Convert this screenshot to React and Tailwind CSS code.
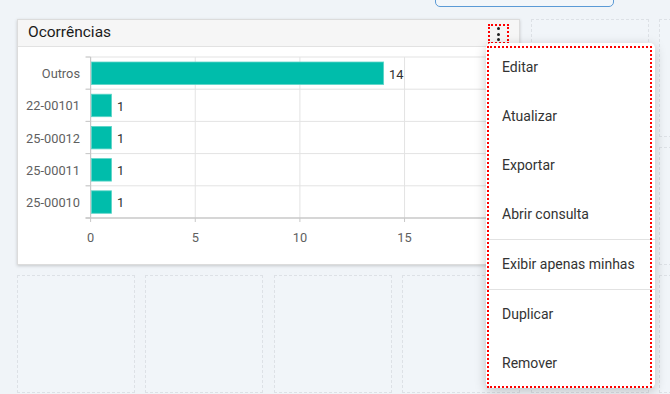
import React from "react";

const cats = [
  ["Outros", 14],
  ["22-00101", 1],
  ["25-00012", 1],
  ["25-00011", 1],
  ["25-00010", 1],
];

function Chart() {
  const x0 = 72.6;
  const unit = 20.93;
  const top = 10;
  const band = 32.2;
  const bottom = top + band * 5;
  const xEnd = x0 + unit * 20;
  return (
    <svg width="501" height="217" className="block">
      {[5, 10, 15, 20].map((v) => (
        <line key={v} x1={x0 + v * unit} x2={x0 + v * unit} y1={top} y2={bottom} stroke="#e3e3e3" strokeWidth="1" />
      ))}
      {[0, 1, 2, 3, 4].map((i) => (
        <line key={i} x1={x0 - 5} x2={xEnd} y1={top + i * band} y2={top + i * band} stroke="#e3e3e3" strokeWidth="1" />
      ))}
      {[0, 1, 2, 3, 4, 5].map((i) => (
        <line key={"t" + i} x1={x0 - 5} x2={x0} y1={top + i * band} y2={top + i * band} stroke="#c8c8c8" strokeWidth="1" />
      ))}
      {[0, 5, 10, 15, 20].map((v) => (
        <line key={"xt" + v} x1={x0 + v * unit} x2={x0 + v * unit} y1={bottom} y2={bottom + 4} stroke="#c8c8c8" strokeWidth="1" />
      ))}
      <line x1={x0} x2={x0} y1={top} y2={bottom} stroke="#c8c8c8" strokeWidth="1.2" />
      <line x1={x0 - 5} x2={xEnd} y1={bottom} y2={bottom} stroke="#c8c8c8" strokeWidth="1.5" />
      {cats.map(([name, v], i) => {
        const y = top + i * band;
        return (
          <g key={name}>
            <rect x={x0 + 0.8} y={y + 5} width={v * unit - 0.8} height={22.5} fill="#00bdab" stroke="#5ed5c8" strokeWidth="0.8" />
            <text x={62} y={y + band / 2 + 0.5} textAnchor="end" dominantBaseline="central" fontSize="12.8" fill="#5f5f5f" fontFamily="Roboto, sans-serif">
              {name}
            </text>
            <text x={x0 + v * unit + 5.5} y={y + band / 2 + 1} dominantBaseline="central" fontSize="12.8" fill="#2f2f2f" fontFamily="Roboto, sans-serif">
              {v}
            </text>
          </g>
        );
      })}
      {[0, 5, 10, 15].map((v) => (
        <text key={"xl" + v} x={x0 + v * unit} y={190} textAnchor="middle" dominantBaseline="central" fontSize="12.8" fill="#5f5f5f" fontFamily="Roboto, sans-serif">
          {v}
        </text>
      ))}
    </svg>
  );
}

function Cell() {
  return <div className="border border-dashed border-[#dde1e6] bg-[#f1f5f9]" />;
}

const items = [
  "Editar",
  "Atualizar",
  "Exportar",
  "Abrir consulta",
  "|",
  "Exibir apenas minhas",
  "|",
  "Duplicar",
  "Remover",
];

export default function App() {
  return (
    <div className="relative w-[670px] h-[394px] overflow-hidden bg-[#f0f4f8] font-['Roboto',sans-serif]">
      <div className="flex h-[7px] items-end pl-[435px]">
        <div className="h-[32px] w-[179px] shrink-0 rounded-[5px] border border-[#5b9ad6] bg-[#f2f6fa]" />
      </div>
      <div className="ml-[17px] mt-[12px] grid grid-cols-[repeat(6,118px)] grid-rows-[repeat(3,118px)] gap-x-[10.4px] gap-y-[10px]">
        <div className="col-span-4 row-span-2 flex flex-col border border-[#dcdcdc] bg-white shadow-[0_1px_3px_rgba(0,0,0,0.18)]">
          <div className="flex h-[27px] shrink-0 items-center justify-between border-b border-[#e2e2e2] bg-[#f6f6f6] pl-[10px] pr-[10px]">
            <span className="text-[15.5px] leading-none text-[#1a1a1a]">Ocorrências</span>
            <div className="mt-[2px] flex h-[20px] w-[21px] flex-col items-center justify-center gap-[2.5px] border-2 border-dotted border-[#ff0000]">
              <span className="block h-[3px] w-[3px] rounded-full bg-[#222]" />
              <span className="block h-[3px] w-[3px] rounded-full bg-[#222]" />
              <span className="block h-[3px] w-[3px] rounded-full bg-[#222]" />
            </div>
          </div>
          <Chart />
        </div>
        <Cell />
        <Cell />
        <Cell />
        <Cell />
        <Cell />
        <Cell />
        <Cell />
        <Cell />
        <Cell />
        <Cell />
      </div>

      <div className="absolute left-[486px] top-[43px] w-[169px] rounded-[5px] bg-white shadow-[0_3px_12px_rgba(0,0,0,0.22)]">
        <div className="pointer-events-none absolute bottom-[0px] left-[1px] right-[3px] top-[3px] border-2 border-dotted border-[#ff0000]" />
        {items.map((it, i) =>
          it === "|" ? (
            <div key={i} className="h-px bg-[#e2e2e2]" />
          ) : (
            <div key={i} className="flex h-[49px] items-center pl-[16px] text-[14px] text-[#333]">
              {it}
            </div>
          )
        )}
      </div>
    </div>
  );
}
